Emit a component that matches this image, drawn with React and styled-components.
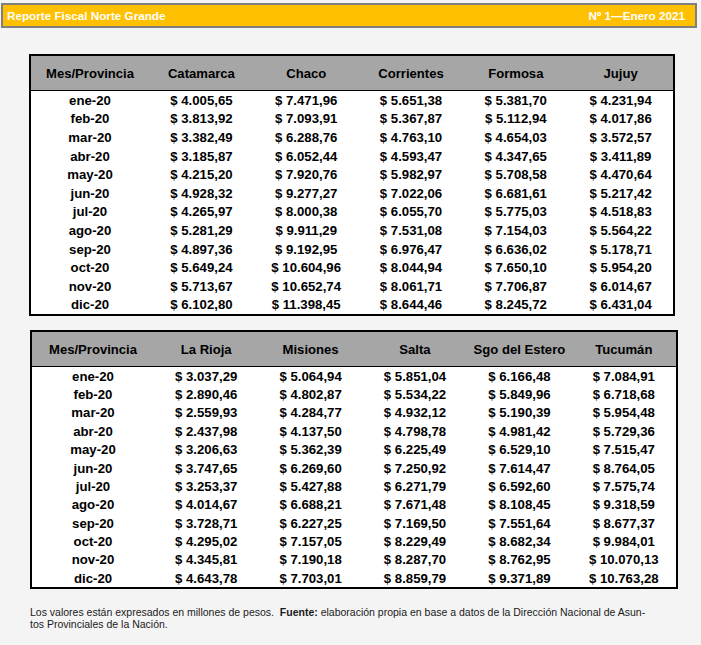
import React from 'react';
import styled, { createGlobalStyle } from 'styled-components';

const GlobalStyle = createGlobalStyle`
  html, body {
    margin: 0;
    padding: 0;
    background: #f4f4f4;
    font-family: "Liberation Sans", Arial, sans-serif;
    color: #000;
  }
`;

const northA = {
  provinces: ['Catamarca', 'Chaco', 'Corrientes', 'Formosa', 'Jujuy'],
  rows: [
    ['ene-20', '$ 4.005,65', '$ 7.471,96', '$ 5.651,38', '$ 5.381,70', '$ 4.231,94'],
    ['feb-20', '$ 3.813,92', '$ 7.093,91', '$ 5.367,87', '$ 5.112,94', '$ 4.017,86'],
    ['mar-20', '$ 3.382,49', '$ 6.288,76', '$ 4.763,10', '$ 4.654,03', '$ 3.572,57'],
    ['abr-20', '$ 3.185,87', '$ 6.052,44', '$ 4.593,47', '$ 4.347,65', '$ 3.411,89'],
    ['may-20', '$ 4.215,20', '$ 7.920,76', '$ 5.982,97', '$ 5.708,58', '$ 4.470,64'],
    ['jun-20', '$ 4.928,32', '$ 9.277,27', '$ 7.022,06', '$ 6.681,61', '$ 5.217,42'],
    ['jul-20', '$ 4.265,97', '$ 8.000,38', '$ 6.055,70', '$ 5.775,03', '$ 4.518,83'],
    ['ago-20', '$ 5.281,29', '$ 9.911,29', '$ 7.531,08', '$ 7.154,03', '$ 5.564,22'],
    ['sep-20', '$ 4.897,36', '$ 9.192,95', '$ 6.976,47', '$ 6.636,02', '$ 5.178,71'],
    ['oct-20', '$ 5.649,24', '$ 10.604,96', '$ 8.044,94', '$ 7.650,10', '$ 5.954,20'],
    ['nov-20', '$ 5.713,67', '$ 10.652,74', '$ 8.061,71', '$ 7.706,87', '$ 6.014,67'],
    ['dic-20', '$ 6.102,80', '$ 11.398,45', '$ 8.644,46', '$ 8.245,72', '$ 6.431,04'],
  ],
};

const northB = {
  provinces: ['La Rioja', 'Misiones', 'Salta', 'Sgo del Estero', 'Tucumán'],
  rows: [
    ['ene-20', '$ 3.037,29', '$ 5.064,94', '$ 5.851,04', '$ 6.166,48', '$ 7.084,91'],
    ['feb-20', '$ 2.890,46', '$ 4.802,87', '$ 5.534,22', '$ 5.849,96', '$ 6.718,68'],
    ['mar-20', '$ 2.559,93', '$ 4.284,77', '$ 4.932,12', '$ 5.190,39', '$ 5.954,48'],
    ['abr-20', '$ 2.437,98', '$ 4.137,50', '$ 4.798,78', '$ 4.981,42', '$ 5.729,36'],
    ['may-20', '$ 3.206,63', '$ 5.362,39', '$ 6.225,49', '$ 6.529,10', '$ 7.515,47'],
    ['jun-20', '$ 3.747,65', '$ 6.269,60', '$ 7.250,92', '$ 7.614,47', '$ 8.764,05'],
    ['jul-20', '$ 3.253,37', '$ 5.427,88', '$ 6.271,79', '$ 6.592,60', '$ 7.575,74'],
    ['ago-20', '$ 4.014,67', '$ 6.688,21', '$ 7.671,48', '$ 8.108,45', '$ 9.318,59'],
    ['sep-20', '$ 3.728,71', '$ 6.227,25', '$ 7.169,50', '$ 7.551,64', '$ 8.677,37'],
    ['oct-20', '$ 4.295,02', '$ 7.157,05', '$ 8.229,49', '$ 8.682,34', '$ 9.984,01'],
    ['nov-20', '$ 4.345,81', '$ 7.190,18', '$ 8.287,70', '$ 8.762,95', '$ 10.070,13'],
    ['dic-20', '$ 4.643,78', '$ 7.703,01', '$ 8.859,79', '$ 9.371,89', '$ 10.763,28'],
  ],
};

function DataTable({ data, first, rowH, $mt, $ml, $width }) {
  return (
    <Table $mt={$mt} $ml={$ml} $width={$width}>
      <HeadRow $first={first}>
        <HeadCell>Mes/Provincia</HeadCell>
        {data.provinces.map((p) => (
          <HeadCell key={p}>{p}</HeadCell>
        ))}
      </HeadRow>
      {data.rows.map((r) => (
        <Row key={r[0]} $first={first} $h={rowH}>
          {r.map((v, i) => (
            <Cell key={i}>{v}</Cell>
          ))}
        </Row>
      ))}
    </Table>
  );
}

export default function App() {
  return (
    <Page>
      <GlobalStyle />
      <TitleBar>
        <span>Reporte Fiscal Norte Grande</span>
        <span>Nº 1—Enero 2021</span>
      </TitleBar>
      <DataTable data={northA} first={118} rowH={18.6} $mt={26} $ml={29} $width={646} />
      <DataTable data={northB} first={122} rowH={18.35} $mt={14} $ml={30} $width={648} />
      <Note>
        Los valores están expresados en millones de pesos.&nbsp; <b>Fuente:</b> elaboración propia en base a datos de la Dirección Nacional de Asun-
        <br />
        tos Provinciales de la Nación.
      </Note>
    </Page>
  );
}

const Page = styled.div`
  width: 701px;
  min-height: 645px;
  padding-top: 3px;
  box-sizing: border-box;
`;

const TitleBar = styled.div`
  margin: 0 4px 0 1px;
  height: 25px;
  box-sizing: border-box;
  border: 2px solid #7f7f7f;
  background: #ffc000;
  display: flex;
  align-items: center;
  justify-content: space-between;
  padding: 0 10px 0 4px;
  color: #fff;
  font-weight: bold;
  font-size: 11.7px;
`;

const Table = styled.div`
  margin-top: ${(p) => p.$mt}px;
  margin-left: ${(p) => p.$ml}px;
  width: ${(p) => p.$width}px;
  box-sizing: border-box;
  border: 2px solid #000;
  background: #fff;
  display: flex;
  flex-direction: column;
`;

const HeadRow = styled.div`
  display: grid;
  grid-template-columns: ${(p) => p.$first}px repeat(5, 1fr);
  height: 35px;
  box-sizing: border-box;
  background: #a6a6a6;
  border-bottom: 1px solid #000;
  align-items: center;
`;

const HeadCell = styled.div`
  text-align: center;
  font-weight: bold;
  font-size: 13.1px;
`;

const Row = styled.div`
  display: grid;
  grid-template-columns: ${(p) => p.$first}px repeat(5, 1fr);
  height: ${(p) => p.$h}px;
  align-items: center;
`;

const Cell = styled.div`
  text-align: center;
  font-weight: bold;
  font-size: 13.2px;
  white-space: nowrap;
`;

const Note = styled.p`
  margin: 17px 0 0 30px;
  font-size: 10.5px;
  line-height: 12px;
  color: #1a1a1a;
  b {
    font-weight: bold;
  }
`;
